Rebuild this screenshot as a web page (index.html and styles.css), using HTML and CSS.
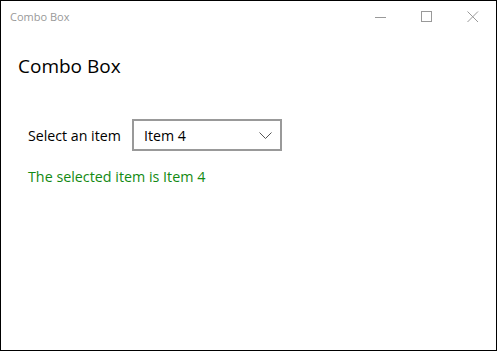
FILE: index.html
```html
<!DOCTYPE html>
<html>
<head>
  <meta charset="UTF-8">
  <title>Combo Box</title>
  <link rel="stylesheet" href="styles.css">
</head>
<body>
  <div class="window">
    <div class="title-bar">
      <span class="title-text">Combo Box</span>
      <div class="controls">
        <span class="ctrl">
          <svg width="12" height="12" viewBox="0 0 12 12"><path d="M0 6.5h11" stroke="#999" stroke-width="1"/></svg>
        </span>
        <span class="ctrl">
          <svg width="12" height="12" viewBox="0 0 12 12"><rect x="0.5" y="0.5" width="10" height="10" fill="none" stroke="#999" stroke-width="1"/></svg>
        </span>
        <span class="ctrl">
          <svg width="12" height="12" viewBox="0 0 12 12"><path d="M0.5 0.5l10.5 10.5M11 0.5L0.5 11" stroke="#999" stroke-width="1"/></svg>
        </span>
      </div>
    </div>

    <div class="content">
      <h1>Combo Box</h1>
      <div class="row">
        <label class="label">Select an item</label>
        <div class="combo">
          <span>Item 4</span>
          <svg width="13" height="7" viewBox="0 0 13 7"><path d="M0.5 0.5l6 6 6-6" fill="none" stroke="#555" stroke-width="1"/></svg>
        </div>
      </div>
      <div class="result">The selected item is Item 4</div>
    </div>
  </div>
</body>
</html>
```

FILE: styles.css
```css
* {
  margin: 0;
  padding: 0;
  box-sizing: border-box;
}

body {
  font-family: 'Open Sans', 'Noto Sans', sans-serif;
  background: white;
}

.window {
  width: 497px;
  height: 351px;
  border: 1px solid #000;
  background: #fff;
}

.title-bar {
  height: 31px;
  display: flex;
  align-items: center;
  justify-content: space-between;
}

.title-text {
  font-size: 11px;
  color: #999;
  margin-left: 9px;
}

.controls {
  display: flex;
  height: 100%;
}

.ctrl {
  width: 46px;
  display: flex;
  align-items: center;
  justify-content: center;
}

.content {
  padding: 21px 0 0 17px;
}

h1 {
  font-size: 19px;
  font-weight: normal;
  color: #000;
  line-height: 26px;
}

.row {
  display: flex;
  align-items: center;
  margin-top: 40px;
  margin-left: 10px;
}

.label {
  font-size: 14.2px;
  color: #000;
  width: 104px;
}

.combo {
  width: 150px;
  height: 32px;
  border: 2px solid #999;
  display: flex;
  align-items: center;
  justify-content: space-between;
  padding: 0 8px 0 10px;
  font-size: 14.2px;
  color: #000;
}

.result {
  font-size: 14.3px;
  color: #138a13;
  margin: 16px 0 0 10px;
}
```
